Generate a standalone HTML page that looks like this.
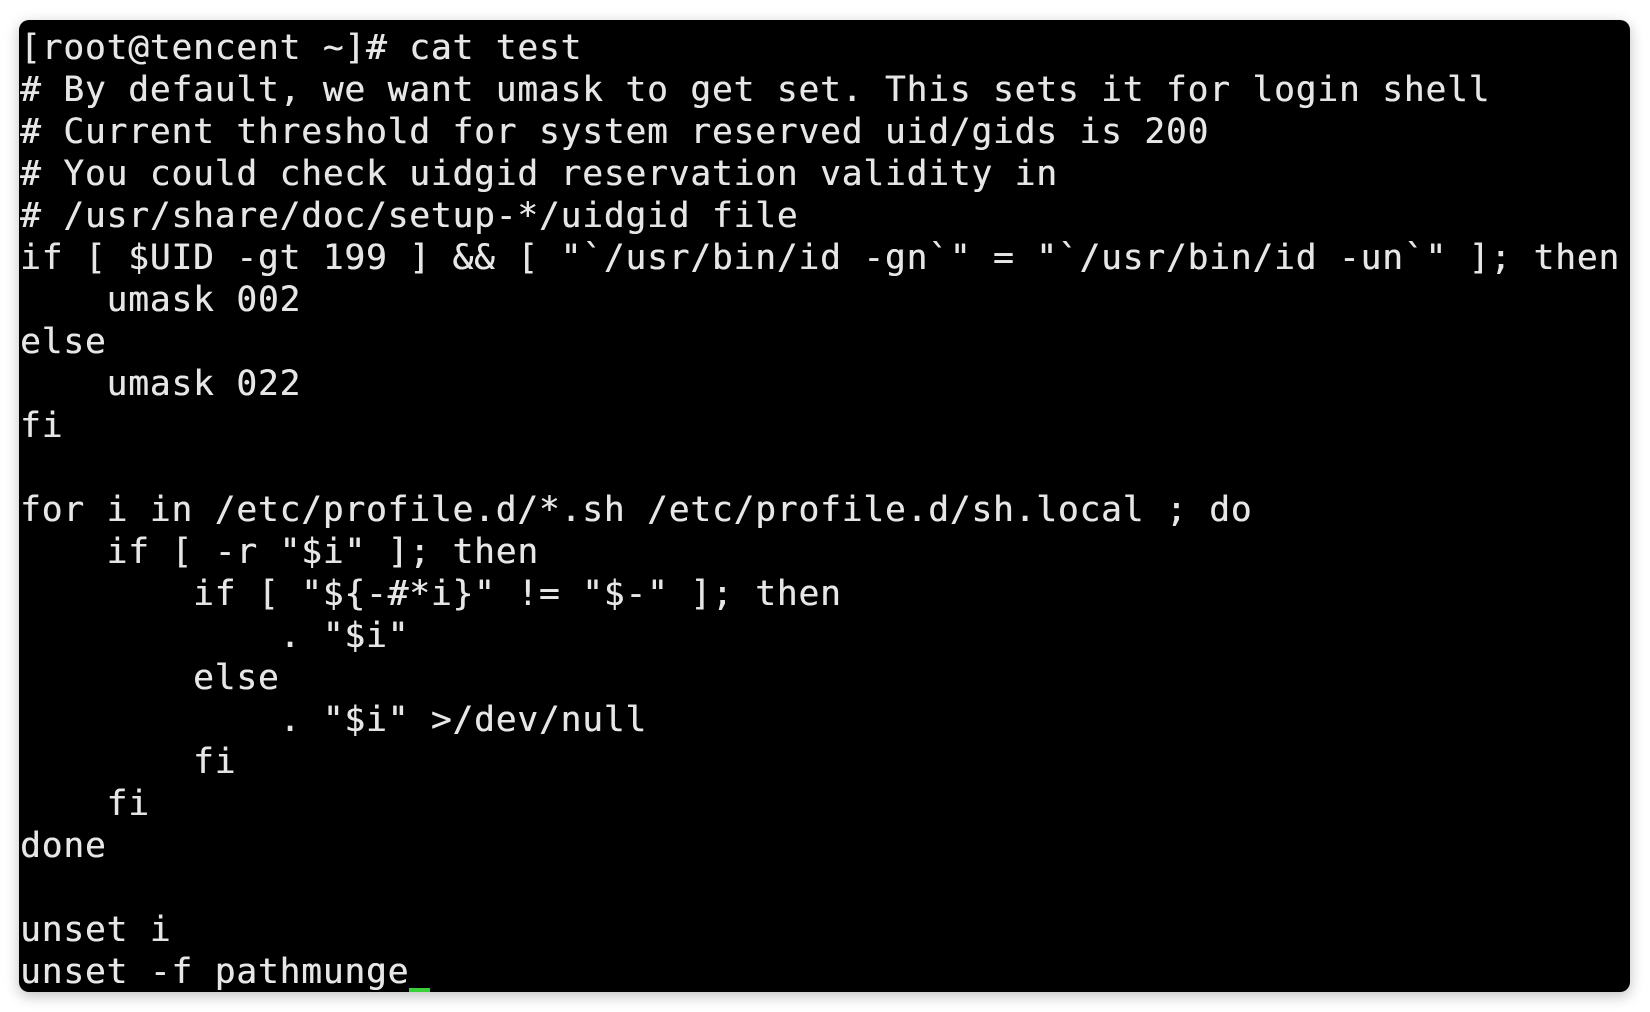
<!DOCTYPE html>
<html><head><meta charset="utf-8"><style>
html,body{margin:0;padding:0;background:#fff;width:1650px;height:1012px;overflow:hidden}
.t{position:absolute;left:19px;top:20px;width:1611px;height:972px;background:#000;border-radius:10px;box-shadow:0 4px 14px rgba(0,0,0,.25);overflow:hidden}
pre{margin:0;position:absolute;left:1px;top:7px;font-family:"DejaVu Sans Mono","Liberation Mono",monospace;font-size:34.5px;line-height:42px;color:#e6e6e6;letter-spacing:0.85px;text-shadow:0.4px 0 0 #e6e6e6}
.c{position:absolute;left:390px;top:968px;width:21px;height:4px;background:#3ad03a}
</style></head><body>
<div class="t"><pre>[root@tencent ~]# cat test
# By default, we want umask to get set. This sets it for login shell
# Current threshold for system reserved uid/gids is 200
# You could check uidgid reservation validity in
# /usr/share/doc/setup-*/uidgid file
if [ $UID -gt 199 ] &amp;&amp; [ "`/usr/bin/id -gn`" = "`/usr/bin/id -un`" ]; then
    umask 002
else
    umask 022
fi

for i in /etc/profile.d/*.sh /etc/profile.d/sh.local ; do
    if [ -r "$i" ]; then
        if [ "${-#*i}" != "$-" ]; then
            . "$i"
        else
            . "$i" &gt;/dev/null
        fi
    fi
done

unset i
unset -f pathmunge</pre><div class="c"></div></div>
</body></html>
